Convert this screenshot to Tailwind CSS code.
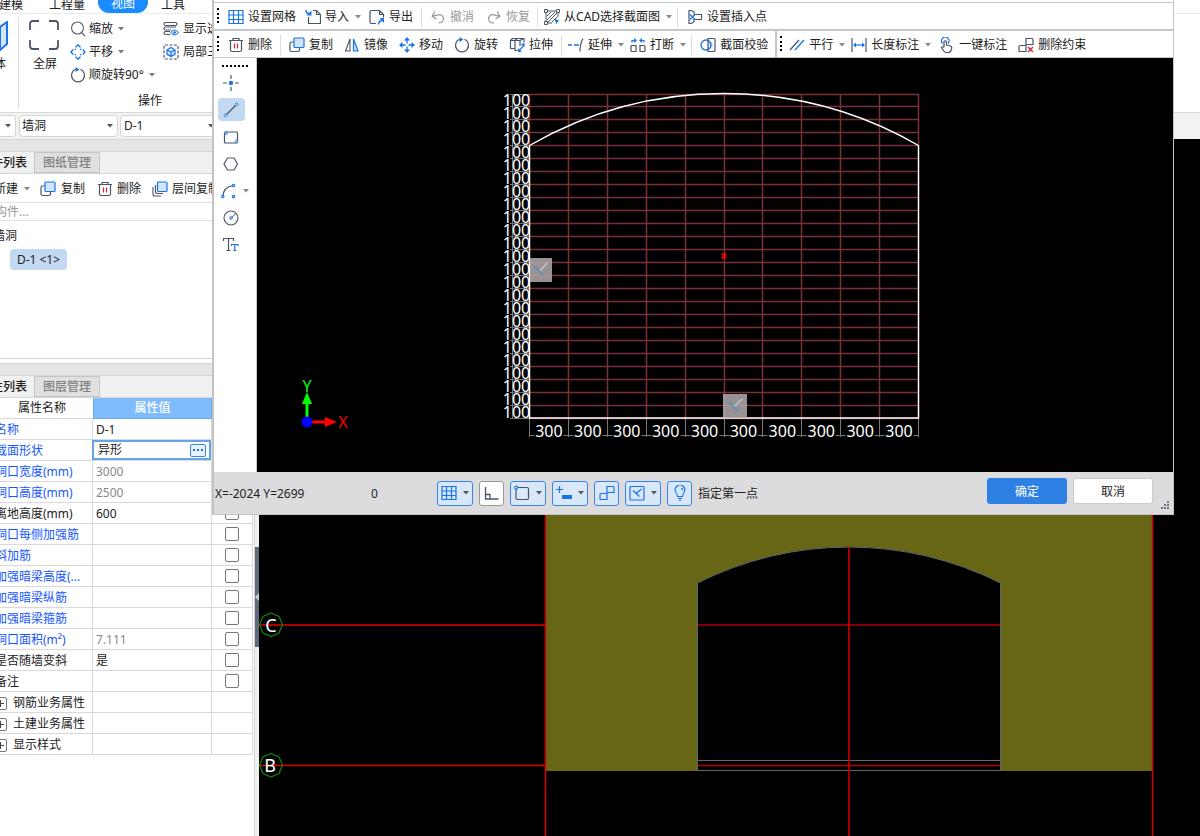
<!DOCTYPE html>
<html lang="zh-CN">
<head>
<meta charset="utf-8">
<title>异形截面编辑器</title>
<script src="https://cdn.jsdelivr.net/npm/@tailwindcss/browser@4"></script>
</head>
<body class="font-['Noto_Sans','Noto_Sans_CJK_SC',sans-serif] text-xs text-[#222] bg-black">
<!-- icon library -->
<svg class="hidden" aria-hidden="true">
  <symbol id="tri" viewBox="0 0 6 4"><path d="M0 0h6L3 3.5z" fill="currentColor"/></symbol>
  <symbol id="grid" viewBox="0 0 16 16"><path d="M1 1.5h14v13H1zM5.5 1.5v13M10.5 1.5v13M1 6h14M1 10.5h14" fill="none" stroke="#1a73e8" stroke-width="1.2"/></symbol>
  <symbol id="import" viewBox="0 0 16 16"><path d="M8 1.5h3.5l4 4v9h-12V8M11.5 1.5v4h4" fill="none" stroke="#4a5568" stroke-width="1.2"/><path d="M1 1c0 3 1 3.500 3 3.500" fill="none" stroke="#1a73e8" stroke-width="1.5"/><path d="M6.500 1.500v5h-5z" fill="#1a73e8"/></symbol>
  <symbol id="export" viewBox="0 0 16 16"><path d="M7 14.5H2.5a1.5 1.5 0 0 1-1.5-1.5v-10a1.5 1.5 0 0 1 1.5-1.5h8l4 4v3M10.5 1.500v4h4" fill="none" stroke="#4a5568" stroke-width="1.2"/><path d="M9.500 15.500c0-2.500 1-3.500 3.500-4" fill="none" stroke="#1a73e8" stroke-width="1.5"/><path d="M10.500 9h4.500v5z" fill="#1a73e8"/></symbol>
  <symbol id="undo" viewBox="0 0 16 16"><path d="M6 2L2.5 6 6 9.5M2.5 6H9a4 4 0 0 1 0 8H7.5" transform="rotate(-12 8 8)" fill="none" stroke="#9a9a9a" stroke-width="1.3"/></symbol>
  <symbol id="redo" viewBox="0 0 16 16"><path d="M10 2l3.5 4L10 9.5M13.5 6H7a4 4 0 0 0 0 8h2" transform="rotate(12 8 8)" fill="none" stroke="#9a9a9a" stroke-width="1.3"/></symbol>
  <symbol id="cad" viewBox="0 0 16 16"><path d="M2 2h12v6M2 2v12h6M3 7l4-4M3 11l8-8M3 14L14 3M8 13l5-5" fill="none" stroke="#4a5568"/><path d="M.5.5h3v3h-3zM12.5.5h3v3h-3zM.5 12.5h3v3h-3z" fill="#fff" stroke="#4a5568"/><path d="M10.5 9.5l5 2.5-2 1-1 2.5z" fill="#1a73e8"/></symbol>
  <symbol id="insert" viewBox="0 0 16 16"><path d="M7 5.5V3L4 1.500H2v13h2L7 13v-2.500h7.500v-5H7" fill="none" stroke="#4a5568" stroke-width="1.2"/><path d="M3 5.500l5 5M8 5.500l-5 5" stroke="#1a73e8" stroke-width="1.2"/></symbol>
  <symbol id="trash" viewBox="0 0 16 16"><path d="M1 3.5h14M5 3.5v-2h6v2M2.500 3.500v9.500q0 1.500 1.500 1.500h8q1.500 0 1.500-1.500V3.500" fill="none" stroke="#4a5568" stroke-width="1.2"/><path d="M6.500 6.500v5M9.500 6.500v5" stroke="#d9232e" stroke-width="1.2"/></symbol>
  <symbol id="copy" viewBox="0 0 16 16"><path d="M5 5H2.5Q1 5 1 6.5V13q0 1.500 1.500 1.500H9q1.500 0 1.500-1.500v-2.500" fill="none" stroke="#4a5568" stroke-width="1.2"/><rect x="5" y="1" width="10" height="9.5" rx="1" fill="#d3e5fb" stroke="#1a73e8" stroke-width="1.2"/></symbol>
  <symbol id="floorcopy" viewBox="0 0 16 16"><path d="M1 6v7q0 2 2 2h6M3.500 4v6.500q0 2 2 2H11" fill="none" stroke="#4a5568" stroke-width="1.1"/><rect x="5.500" y="1" width="9.500" height="9.500" rx="1" fill="#d3e5fb" stroke="#1a73e8" stroke-width="1.2"/></symbol>
  <symbol id="mirror" viewBox="0 0 16 16"><path d="M6 2v12H1.5z" fill="none" stroke="#4a5568" stroke-width="1.1"/><path d="M9.500 2v12H14z" fill="#cfe3fb" stroke="#1a73e8" stroke-width="1.2"/></symbol>
  <symbol id="move" viewBox="0 0 16 16"><g fill="#1a73e8"><path d="M8 0l3 3.5H5zM8 16l3-3.5H5zM0 8l3.5-3v6zM16 8l-3.5-3v6z"/></g><path d="M8 3v10M3 8h10" stroke="#1a73e8" stroke-width="1.3" stroke-dasharray="3.5 3"/></symbol>
  <symbol id="pan" viewBox="0 0 16 16"><g fill="none" stroke="#1a73e8" stroke-width="1.400"><path d="M5.500 3.200L8 1l2.500 2.200M5.500 12.800L8 15l2.500-2.200M3.200 5.500L1 8l2.200 2.500M12.800 5.500L15 8l-2.200 2.500"/><path d="M5 6V5h1M10 5h1v1M11 10v1h-1M6 11H5v-1" stroke-width="1"/></g></symbol>
  <symbol id="rotate" viewBox="0 0 16 16"><path d="M10.5 2.300a6.500 6.500 0 1 1-5 0" fill="none" stroke="#4a5568" stroke-width="1.2"/><path d="M5.500 0l4 2.500-4 2.500z" fill="#1a73e8"/></symbol>
  <symbol id="stretch" viewBox="0 0 16 16"><path d="M8.500 13.500H6V3.500H1.500v8H6M1.500 3.500l2-2h11.500v4M6 3.500l2-2M6 3.500l5 0V9M11 3.500l3.500-2" fill="none" stroke="#4a5568" stroke-width="1.2"/><path d="M10 14l5-6" stroke="#1a73e8" stroke-width="1.2"/><path d="M15.500 6v4l-3.500-3zM9 11v4h3.500z" fill="#1a73e8"/></symbol>
  <symbol id="extend" viewBox="0 0 16 16"><path d="M0 8h4M6 8h5" stroke="#1a73e8" stroke-width="1.3"/><path d="M15 1.500q-3 5-3 13" fill="none" stroke="#4a5568" stroke-width="1.2"/></symbol>
  <symbol id="break" viewBox="0 0 16 16"><path d="M6 8.500H2q-1 0-1 1v4q0 1 1 1h4zM10 8.500h4q1 0 1 1v4q0 1-1 1h-4z" fill="none" stroke="#4a5568" stroke-width="1.2"/><path d="M2 5.500V3.500h3M14 5.500V3.500h-3" fill="none" stroke="#1a73e8" stroke-width="1.2"/><path d="M4 1l3 2.500L4 6zM12 1L9 3.500 12 6z" fill="#1a73e8"/></symbol>
  <symbol id="verify" viewBox="0 0 16 16"><path d="M8 1.500h6q1 0 1 1v11q0 1-1 1H8" fill="none" stroke="#4a5568" stroke-width="1.2"/><path d="M8 3a5 5 0 0 1 0 10z" fill="#d3e5fb"/><circle cx="6" cy="8" r="5" fill="none" stroke="#1a73e8" stroke-width="1.3"/><path d="M8 1v14" stroke="#4a5568" stroke-width="1.2"/></symbol>
  <symbol id="parallel" viewBox="0 0 16 16"><path d="M1 13L10 3" stroke="#4a5568" stroke-width="1.2"/><path d="M6 13l9-10" stroke="#1a73e8" stroke-width="1.3"/></symbol>
  <symbol id="dim" viewBox="0 0 16 16"><path d="M1 1v14M15 1v14" stroke="#4a5568" stroke-width="1.2"/><path d="M3 8h10" stroke="#1a73e8" stroke-width="1.2"/><path d="M2 8l3-2.500v5zM14 8l-3-2.500v5z" fill="#1a73e8"/></symbol>
  <symbol id="hand" viewBox="0 0 16 16"><path d="M3.500 6.500a3.800 3.800 0 1 1 5.500 0" fill="none" stroke="#1a73e8" stroke-width="1.3"/><path d="M5 10V4.500q1.200-1.500 2.400 0V8l4 1q1.600.5 1.300 2l-.5 2q-.7 2.500-3 2.500H7.500q-2 0-3.500-2.500L2.500 10.500Q4 9 5 10.500" fill="none" stroke="#4a5568" stroke-width="1.2"/></symbol>
  <symbol id="unlink" viewBox="0 0 16 16"><path d="M8 14.500H2q-1 0-1-1v-4q0-1 1-1h6zM8 8V1.500h6q1 0 1 1V7.500H8" fill="none" stroke="#4a5568" stroke-width="1.2"/><path d="M10 10l5 5M15 10l-5 5" stroke="#d9232e" stroke-width="1.4"/></symbol>
  <symbol id="point" viewBox="0 0 16 16"><path d="M8 0v4M8 12v4M0 8h4M12 8h4" stroke="#4a5568" stroke-width="1.2"/><circle cx="8" cy="8" r="2.2" fill="#1a73e8"/></symbol>
  <symbol id="line" viewBox="0 0 16 16"><path d="M3 13L13 3" stroke="#4a5568" stroke-width="1.2"/><g fill="#fff" stroke="#1a73e8"><circle cx="2.500" cy="13.500" r="1.3"/><circle cx="13.500" cy="2.500" r="1.3"/></g></symbol>
  <symbol id="rect" viewBox="0 0 16 16"><rect x="1.500" y="3" width="13" height="11" rx="1" fill="none" stroke="#4a5568" stroke-width="1.2"/><g fill="#fff" stroke="#1a73e8"><circle cx="3" cy="4" r="1.3"/><circle cx="13.500" cy="12.500" r="1.3"/></g></symbol>
  <symbol id="hex" viewBox="0 0 16 16"><path d="M4.500 2h6.500L14.500 8 11 14H4.500L1 8z" fill="none" stroke="#4a5568" stroke-width="1.2"/></symbol>
  <symbol id="arc" viewBox="0 0 16 16"><path d="M2 13Q2.500 4 12 2.500" fill="none" stroke="#4a5568" stroke-width="1.2"/><g fill="#fff" stroke="#1a73e8" stroke-width="1.2"><circle cx="1.800" cy="13.500" r="1.2"/><circle cx="12.500" cy="2.500" r="1.2"/><circle cx="12.500" cy="13.500" r="1.2"/></g></symbol>
  <symbol id="circ" viewBox="0 0 16 16"><circle cx="8" cy="8" r="7" fill="none" stroke="#4a5568" stroke-width="1.1"/><path d="M8 8l5-4.500" stroke="#4a5568"/><circle cx="8" cy="8" r="1.3" fill="#fff" stroke="#1a73e8"/></symbol>
  <symbol id="text" viewBox="0 0 16 16"><path d="M.5 4V1.500h10V4M5.500 1.500v12M3.500 13.500h4" fill="none" stroke="#4a5568" stroke-width="1.2"/><path d="M8.500 9V7.500H15V9M11.800 7.500v6M10.300 13.500h3" fill="none" stroke="#1a73e8" stroke-width="1.2"/></symbol>
  <symbol id="zoomg" viewBox="0 0 16 16"><circle cx="7.500" cy="7" r="6" fill="none" stroke="#5a6474" stroke-width="1.1"/><path d="M11.500 11.500L15 15" stroke="#5a6474" stroke-width="1.2"/></symbol>
  <symbol id="layers" viewBox="0 0 16 16"><g fill="none" stroke="#4a5568" stroke-width="1.2"><rect x="1" y="1.500" width="13" height="3" rx="1.5"/><path d="M8 9H2.500a1.500 1.500 0 0 1 0-3H13M7 13.500H2.500a1.500 1.500 0 0 1 0-3H7"/></g><path d="M7.500 11.500q4-5 8 0-4 5-8 0z" fill="#d3e5fb" stroke="#1a73e8"/><circle cx="11.500" cy="11.500" r="1.3" fill="#1a73e8"/></symbol>
  <symbol id="local3d" viewBox="0 0 16 16"><rect x="1" y="1" width="14" height="14" rx="1" fill="none" stroke="#4a5568" stroke-width="1.2" stroke-dasharray="3 1.5"/><path d="M8 3.500l4 2.300v4.500l-4 2.300-4-2.300V5.800zM4 5.800L8 8l4-2.200M8 8v4.500" fill="#d3e5fb" stroke="#1a73e8" stroke-width="1.2"/></symbol>
  <symbol id="ortho" viewBox="0 0 16 16"><path d="M1.500 2v12h13M1.500 9.500h4.500v4.500" fill="none" stroke="#4a5568" stroke-width="1.3"/></symbol>
  <symbol id="snap" viewBox="0 0 16 16"><rect x="2" y="2.500" width="12.500" height="12" rx="1.5" fill="none" stroke="#4a5568" stroke-width="1.2"/><circle cx="2.200" cy="2.700" r="1.5" fill="#fff" stroke="#1a73e8" stroke-width="1.2"/></symbol>
  <symbol id="dyn" viewBox="0 0 16 16"><path d="M3.500 1v7M0 4.500h7" stroke="#1a73e8" stroke-width="1.2"/><rect x="6" y="10" width="10" height="4" fill="#1a73e8"/></symbol>
  <symbol id="link" viewBox="0 0 16 16"><path d="M8 14.500H2q-1 0-1-1V9.500q0-1 1-1h6zM8 8.500V1.500h6q1 0 1 1v5H8" fill="none" stroke="#1a73e8" stroke-width="1.2"/></symbol>
  <symbol id="perp" viewBox="0 0 16 16"><rect x="1" y="1.500" width="14" height="13.500" rx="1" fill="none" stroke="#1a73e8" stroke-width="1.2"/><path d="M4 5.500l6.500 6M7 8.500L12.500 4" stroke="#1a73e8" stroke-width="1.2"/></symbol>
  <symbol id="bulb" viewBox="0 0 16 16"><path d="M5.500 11.500Q5.500 9.500 4 7.500a4.800 4.800 0 1 1 8 0Q10.500 9.500 10.500 11.500zM9 3.200q2 .5 2 2.500M6 13.500h4M7 15.300h2" fill="none" stroke="#1a73e8" stroke-width="1.1"/></symbol>
</svg>

<div class="relative h-screen overflow-hidden flex flex-col">

  <!-- ribbon -->
  <header class="h-28 shrink-0 bg-white overflow-hidden">
    <nav class="h-3.5 flex items-end border-b border-[#ececec]">
      <button class="-ml-px w-6 h-5 pt-1 leading-4 whitespace-nowrap">建模</button>
      <button class="ml-[26px] w-9 h-5 pt-1 leading-4 whitespace-nowrap">工程量</button>
      <button class="ml-[13px] w-[50px] h-[22px] pt-1 leading-4 rounded-full bg-[#1a8cff] text-white">视图</button>
      <button class="ml-[13px] w-6 h-5 pt-1 leading-4 whitespace-nowrap">工具</button>
    </nav>
    <div class="flex pt-[3px]">
      <button class="w-[19px] h-[91px] border-r border-[#ddd] flex flex-col items-start pt-1 overflow-hidden">
        <svg class="w-2.5 h-8" viewBox="0 0 10 32"><path d="M0 6L7 1v22l-7 6z" fill="#d3e5fb" stroke="#1a73e8" stroke-width="2"/></svg>
        <span class="-ml-1.5 mt-[3px] leading-4">体</span>
      </button>
      <div class="flex-1">
        <div class="flex">
          <button class="ml-2.5 w-[30px] flex flex-col items-center pt-[3px]">
            <svg class="w-[30px] h-[30px]" viewBox="0 0 30 30"><path d="M1 10V4q0-3 3-3h6M20 1h6q3 0 3 3v6M29 20v6q0 3-3 3h-6M10 29H4q-3 0-3-3v-6" fill="none" stroke="#4a5568" stroke-width="1.8"/></svg>
            <span class="ml-0.5 mt-1.5 leading-4 whitespace-nowrap">全屏</span>
          </button>
          <div class="ml-[11px] w-[93px] flex flex-col">
            <button class="h-[23px] flex items-center gap-[3px]"><svg class="size-4"><use href="#zoomg"/></svg>缩放<svg class="ml-0.5 w-1.5 h-1 text-[#777]"><use href="#tri"/></svg></button>
            <button class="h-[23px] flex items-center gap-[3px]"><svg class="size-4"><use href="#pan"/></svg>平移<svg class="ml-0.5 w-1.5 h-1 text-[#777]"><use href="#tri"/></svg></button>
            <button class="h-[23px] flex items-center gap-[3px] whitespace-nowrap"><svg class="size-4"><use href="#rotate"/></svg>顺旋转90°<svg class="ml-0.5 w-1.5 h-1 text-[#777]"><use href="#tri"/></svg></button>
          </div>
          <div class="flex flex-col">
            <button class="h-[23px] flex items-center gap-1"><svg class="size-4"><use href="#layers"/></svg>显示选中图元</button>
            <button class="h-[23px] flex items-center gap-1"><svg class="size-4"><use href="#local3d"/></svg>局部三维</button>
          </div>
        </div>
        <div class="ml-[119px] mt-[7px] leading-4">操作</div>
      </div>
    </div>
  </header>

  <!-- component selectors -->
  <div class="h-[27px] shrink-0 bg-[#f2f2f2] border-t border-[#d9d9d9] flex items-center">
    <span class="relative w-4 h-[22px] flex items-center"><select aria-label="楼层" class="appearance-none w-full h-full bg-white border border-l-0 border-[#d5d5d5] rounded-r"><option></option></select><svg class="absolute right-[5px] w-1.5 h-1 text-[#555] pointer-events-none"><use href="#tri"/></svg></span>
    <span class="relative ml-[3px] w-[99px] h-[22px] flex items-center"><select aria-label="构件类型" class="appearance-none w-full h-full bg-white border border-[#d5d5d5] rounded pl-0.5"><option>墙洞</option></select><svg class="absolute right-[5px] w-1.5 h-1 text-[#555] pointer-events-none"><use href="#tri"/></svg></span>
    <span class="relative ml-0.5 w-[96px] h-[22px] flex items-center"><select aria-label="构件名称" class="appearance-none w-full h-full bg-white border border-[#d5d5d5] rounded pl-[3px]"><option>D-1</option></select><svg class="absolute right-0.5 w-1.5 h-1 text-[#555] pointer-events-none"><use href="#tri"/></svg></span>
  </div>

  <div class="flex-1 min-h-0 flex">
    <!-- side panels -->
    <aside class="w-[259px] shrink-0 bg-white flex overflow-hidden">
      <div class="w-[255px] shrink-0 border-r border-[#d5d5d5] flex flex-col">
        <div class="h-3 shrink-0 bg-[#e5e5e5] border-t border-[#d5d5d5]"></div>
        <div class="h-[23px] shrink-0 bg-[#f0f0f0] border-y border-[#d5d5d5] flex font-medium">
          <button class="w-[34px] flex justify-end items-center pr-[7px] whitespace-nowrap">构件列表</button>
          <button class="w-[66px] bg-[#e0e0e0] border border-[#c4c6ce] text-[#808080] whitespace-nowrap leading-4">图纸管理</button>
        </div>
        <div class="h-7 pt-0.5 shrink-0 flex items-center whitespace-nowrap">
          <button class="-ml-1.5 flex items-center">新建<svg class="ml-1.5 w-1.5 h-1 text-[#888]"><use href="#tri"/></svg></button>
          <button class="ml-2.5 flex items-center gap-[5px]"><svg class="size-4"><use href="#copy"/></svg>复制</button>
          <button class="ml-3 flex items-center gap-1"><svg class="size-4"><use href="#trash"/></svg>删除</button>
          <button class="ml-[11px] flex items-center gap-1"><svg class="size-4"><use href="#floorcopy"/></svg>层间复制</button>
        </div>
        <div class="h-[19px] shrink-0 border-y border-[#e0e0e0] flex items-center"><input aria-label="搜索构件" placeholder="构件..." class="-ml-[5px] w-full h-4 outline-none placeholder:text-[#999]"></div>
        <div class="h-[138px] shrink-0 border-b border-[#d0d0d0] pt-1.5">
          <div class="-ml-[7px] leading-[18px]">墙洞</div>
          <button class="block mt-1 ml-2.5 w-[57px] h-[21px] rounded-sm bg-[#c2d9f1] whitespace-nowrap">D-1 &lt;1&gt;</button>
        </div>
        <div class="h-1 shrink-0"></div>
        <div class="h-3 shrink-0 bg-[#e5e5e5] border-t border-[#d5d5d5]"></div>
        <div class="h-[23px] shrink-0 bg-[#f0f0f0] border-y border-[#d5d5d5] flex font-medium">
          <button class="w-[34px] flex justify-end items-center pr-[7px] whitespace-nowrap">属性列表</button>
          <button class="w-[66px] bg-[#e0e0e0] border border-[#c4c6ce] text-[#808080] whitespace-nowrap leading-4">图层管理</button>
        </div>
        <table class="-ml-[5px] w-[258px] table-fixed border-separate border-spacing-0 text-left whitespace-nowrap [&_td]:border-b [&_td]:border-r [&_td]:border-[#d9d9d9] [&_td]:p-0 [&_tr]:h-[21px]">
          <thead><tr>
            <th class="w-[98px] p-0 pl-[23px] font-normal border-b border-[#d9d9d9]">属性名称</th>
            <th class="w-[119px] p-0 text-center font-medium text-white bg-[#80bbfb] border border-t-0 border-[#6aa9ea]">属性值</th>
            <th class="w-[41px] p-0 border-b border-[#d9d9d9]"></th>
          </tr></thead>
          <tbody id="props"></tbody>
        </table>
      </div>
      <div class="w-1 bg-[#f0f0f0] flex flex-col">
        <div class="mt-[408px] h-[100px] bg-[#5f6b7a] flex items-center"><svg class="w-1 h-2" viewBox="0 0 4 8"><path d="M4 0v8L0 4z" fill="#ccc"/></svg></div>
      </div>
    </aside>

    <!-- model view -->
    <main class="flex-1 min-w-0 bg-black">
      <svg class="w-full h-full" viewBox="259 139 941 697" preserveAspectRatio="xMinYMin slice">
        <path fill="#666614" d="M545 500H1152V771H1001V583A337 337 0 0 0 697 583V771H545z"/>
        <path fill="none" stroke="#62666e" d="M697.5 771V583A337 337 0 0 1 1000.5 583V771M697 760.5h304M697 770.5h304"/>
        <path fill="none" stroke="#e00000" stroke-width="1.5" d="M259 625H545M259 765.5H545"/>
        <path fill="none" stroke="#b00000" stroke-width="1.5" d="M698 765.5h302M698 625h302"/>
        <path fill="none" stroke="#d80000" stroke-width="1.5" d="M545.5 500V836M849 547V836M1152.5 500V836"/>
        <g fill="none" stroke="#0a8a0a" stroke-width="1.2"><path d="M271 613l8 3.500 3.500 8-3.500 8.500-8 3.500-8-3.500-3.500-8.500 3.500-8z"/><path d="M271 753.500l8 3.500 3.500 8-3.500 8.500-8 3.500-8-3.500-3.500-8.500 3.500-8z"/></g>
        <g fill="#fff" font-size="18" text-anchor="middle"><text x="271" y="632">C</text><text x="270" y="772">B</text></g>
      </svg>
    </main>
  </div>

  <!-- section editor dialog -->
  <section role="dialog" aria-label="异形截面编辑器" class="absolute top-0 left-[212px] right-[26px] h-[515px] flex flex-col bg-white border-l-2 border-r border-b border-[#c3c3c5]">
    <div class="h-0.5 shrink-0"></div>
    <div class="h-[29px] pt-0.5 shrink-0 border-t border-b-2 border-[#c3c6cb] flex items-center whitespace-nowrap">
      <span class="ml-[3px] mb-1 h-[15px] border-l-2 border-dotted border-black"></span>
      <button class="ml-[9px] flex items-center gap-1"><svg class="size-4"><use href="#grid"/></svg>设置网格</button>
      <button class="ml-[9px] flex items-center gap-1"><svg class="size-4"><use href="#import"/></svg>导入<svg class="ml-0.5 w-1.5 h-1 text-[#888]"><use href="#tri"/></svg></button>
      <button class="ml-2 flex items-center gap-1"><svg class="size-4"><use href="#export"/></svg>导出</button>
      <span class="ml-2 w-px h-5 bg-[#ddd]"></span>
      <button class="ml-2 flex items-center gap-1 text-[#9a9a9a]"><svg class="size-4"><use href="#undo"/></svg>撤消</button>
      <button class="ml-3 flex items-center gap-1 text-[#9a9a9a]"><svg class="size-4"><use href="#redo"/></svg>恢复</button>
      <span class="ml-[7px] w-px h-5 bg-[#ddd]"></span>
      <button class="ml-1.5 flex items-center gap-1"><svg class="size-4"><use href="#cad"/></svg>从CAD选择截面图<svg class="ml-0.5 w-1.5 h-1 text-[#888]"><use href="#tri"/></svg></button>
      <span class="ml-[5px] w-px h-5 bg-[#ddd]"></span>
      <button class="ml-[9px] flex items-center gap-1"><svg class="size-4"><use href="#insert"/></svg>设置插入点</button>
    </div>
    <div class="h-[27px] pt-0.5 shrink-0 border-b border-[#c3c6cb] flex items-center whitespace-nowrap">
      <span class="ml-[3px] mb-1 h-[15px] border-l-2 border-dotted border-black"></span>
      <button class="ml-[9px] flex items-center gap-1"><svg class="size-4"><use href="#trash"/></svg>删除</button>
      <span class="ml-2 w-px h-5 bg-[#ddd]"></span>
      <button class="ml-2 flex items-center gap-1"><svg class="size-4"><use href="#copy"/></svg>复制</button>
      <button class="ml-[11px] flex items-center gap-1"><svg class="size-4"><use href="#mirror"/></svg>镜像</button>
      <button class="ml-[11px] flex items-center gap-1"><svg class="size-4"><use href="#move"/></svg>移动</button>
      <button class="ml-[11px] flex items-center gap-1"><svg class="size-4"><use href="#rotate"/></svg>旋转</button>
      <button class="ml-[11px] flex items-center gap-1"><svg class="size-4"><use href="#stretch"/></svg>拉伸</button>
      <span class="ml-2 w-px h-5 bg-[#ddd]"></span>
      <button class="ml-1.5 flex items-center gap-1"><svg class="size-4"><use href="#extend"/></svg>延伸<svg class="ml-0.5 w-1.5 h-1 text-[#888]"><use href="#tri"/></svg></button>
      <button class="ml-1.5 flex items-center gap-1"><svg class="size-4"><use href="#break"/></svg>打断<svg class="ml-0.5 w-1.5 h-1 text-[#888]"><use href="#tri"/></svg></button>
      <span class="ml-[5px] w-px h-5 bg-[#ddd]"></span>
      <button class="ml-2 flex items-center gap-1"><svg class="size-4"><use href="#verify"/></svg>截面校验</button>
      <span class="ml-[7px] -mt-0.5 w-0.5 h-[26px] bg-[#c3c6cb]"></span>
      <span class="ml-[3px] mb-1 h-[15px] border-l-2 border-dotted border-black"></span>
      <button class="ml-[7px] flex items-center gap-1"><svg class="size-4"><use href="#parallel"/></svg>平行<svg class="ml-0.5 w-1.5 h-1 text-[#888]"><use href="#tri"/></svg></button>
      <button class="ml-1.5 flex items-center gap-1"><svg class="size-4"><use href="#dim"/></svg>长度标注<svg class="ml-0.5 w-1.5 h-1 text-[#888]"><use href="#tri"/></svg></button>
      <button class="ml-2 flex items-center gap-1"><svg class="size-4"><use href="#hand"/></svg>一键标注</button>
      <button class="ml-[11px] flex items-center gap-1"><svg class="size-4"><use href="#unlink"/></svg>删除约束</button>
    </div>
    <div class="flex-1 min-h-0 flex">
      <div class="w-[43px] shrink-0 border-r border-[#c3c6cb] flex flex-col items-start pl-1">
        <span class="ml-1 mt-[7px] mb-0.5 w-[26px] border-t-2 border-dotted border-black"></span>
        <button aria-label="点" class="w-[27px] h-[27px] pr-0.5 flex items-center justify-center"><svg class="size-4"><use href="#point"/></svg></button>
        <button aria-label="直线" class="w-[27px] h-[23px] pr-0.5 my-0.5 rounded bg-[#c2d9f1] flex items-center justify-center"><svg class="size-4"><use href="#line"/></svg></button>
        <button aria-label="矩形" class="w-[27px] h-[27px] pr-0.5 flex items-center justify-center"><svg class="size-4"><use href="#rect"/></svg></button>
        <button aria-label="多边形" class="w-[27px] h-[27px] pr-0.5 flex items-center justify-center"><svg class="size-4"><use href="#hex"/></svg></button>
        <button aria-label="圆弧" class="h-[27px] pl-[3px] flex items-center gap-1.5"><svg class="size-4"><use href="#arc"/></svg><svg class="w-1.5 h-1 text-[#888]"><use href="#tri"/></svg></button>
        <button aria-label="圆" class="w-[27px] h-[27px] pr-0.5 flex items-center justify-center"><svg class="size-4"><use href="#circ"/></svg></button>
        <button aria-label="文字" class="w-[27px] h-[27px] pr-0.5 flex items-center justify-center"><svg class="size-4"><use href="#text"/></svg></button>
      </div>
      <div class="flex-1 min-w-0 bg-black">
        <svg class="w-full h-full" viewBox="257 58 916 414" preserveAspectRatio="xMinYMin meet">
          <path id="gridLines" fill="none" stroke="#7a3038" stroke-width="1.5"/>
          <path id="dimLines" fill="none" stroke="#777" stroke-width="1"/>
          <g id="labels" fill="#fff" font-size="16" text-anchor="middle"></g>
          <path d="M529.5 418V145.5A390 390 0 0 1 918.5 145.5V418z" fill="none" stroke="#fff" stroke-width="1.4"/>
          <path d="M721.5 253.500l5 5M726.500 253.500l-5 5M724 253v6" stroke="#f00" stroke-width="1.3"/>
          <g fill="#b4acac" fill-opacity=".85"><path d="M530 258h22v24h-22zM723 394h24v24h-24z"/></g>
          <path d="M540 271l7-8M734 407l8-8" stroke="#c4c4c8" stroke-width="1.5"/>
          <path d="M534 266l9 9M729 402l9 9" stroke="#4a90d9" stroke-width="1.4"/>
          <path d="M307 422V400" stroke="#0f0" stroke-width="3"/><path d="M307 392l5 12h-10z" fill="#0f0"/>
          <path d="M307 422h20" stroke="#f00" stroke-width="3"/><path d="M337 422l-12-5v10z" fill="#f00"/>
          <circle cx="307" cy="422" r="5.5" fill="#00f"/>
          <g font-size="16" text-anchor="middle"><text x="307" y="392" fill="#0f0">Y</text><text x="343" y="428" fill="#f00">X</text></g>
        </svg>
      </div>
    </div>
    <footer class="h-[42px] shrink-0 bg-[#dcdcde] flex items-center pl-px">
      <output class="w-[156px] pt-0.5 whitespace-nowrap">X=-2024 Y=2699</output>
      <output class="w-[66px] pt-0.5">0</output>
      <div class="flex gap-1.5">
        <button aria-label="网格" class="w-9 h-[25px] rounded-[3px] border border-[#3a86e8] bg-[#d9e7fa] flex items-center justify-between px-[3px]"><svg class="size-4"><use href="#grid"/></svg><svg class="w-1.5 h-1 text-[#555]"><use href="#tri"/></svg></button>
        <button aria-label="正交" class="w-[25px] h-[25px] rounded-[3px] border border-[#999] bg-white flex items-center justify-center"><svg class="size-4"><use href="#ortho"/></svg></button>
        <button aria-label="捕捉" class="w-9 h-[25px] rounded-[3px] border border-[#3a86e8] bg-[#d9e7fa] flex items-center justify-between px-[3px]"><svg class="size-4"><use href="#snap"/></svg><svg class="w-1.5 h-1 text-[#555]"><use href="#tri"/></svg></button>
        <button aria-label="动态输入" class="w-9 h-[25px] rounded-[3px] border border-[#3a86e8] bg-[#d9e7fa] flex items-center justify-between px-[3px]"><svg class="size-4"><use href="#dyn"/></svg><svg class="w-1.5 h-1 text-[#555]"><use href="#tri"/></svg></button>
        <button aria-label="约束" class="w-[25px] h-[25px] rounded-[3px] border border-[#3a86e8] bg-[#d9e7fa] flex items-center justify-center"><svg class="size-4"><use href="#link"/></svg></button>
        <button aria-label="垂直约束" class="w-9 h-[25px] rounded-[3px] border border-[#3a86e8] bg-[#d9e7fa] flex items-center justify-between px-[3px]"><svg class="size-4"><use href="#perp"/></svg><svg class="w-1.5 h-1 text-[#555]"><use href="#tri"/></svg></button>
        <button aria-label="提示" class="w-[25px] h-[25px] rounded-[3px] border border-[#3a86e8] bg-[#d9e7fa] flex items-center justify-center"><svg class="size-4"><use href="#bulb"/></svg></button>
      </div>
      <span class="ml-1.5 pt-0.5 whitespace-nowrap">指定第一点</span>
      <div class="ml-auto flex gap-1.5 mb-1">
        <button class="w-20 h-[26px] pt-px rounded-[3px] bg-[#2f80e4] text-white">确定</button>
        <button class="w-20 h-[26px] pt-px rounded-[3px] bg-white border border-[#cbcbcb]">取消</button>
      </div>
      <svg class="ml-2 mr-1 mt-6 size-2" viewBox="0 0 8 8"><path d="M6 0h2v2H6zM3 3h2v2H3zM6 3h2v2H6zM0 6h2v2H0zM3 6h2v2H3zM6 6h2v2H6z" fill="#6b7480"/></svg>
    </footer>
  </section>
</div>

<script>
  // Property rows: [name, value, kind]
  const rows = [
    ['名称', 'D-1', 'blue'], ['截面形状', '异形', 'edit'], ['洞口宽度(mm)', '3000', 'calc'], ['洞口高度(mm)', '2500', 'calc'],
    ['离地高度(mm)', '600', ''], ['洞口每侧加强筋', '', 'blue'], ['斜加筋', '', 'blue'], ['加强暗梁高度(...', '', 'blue'],
    ['加强暗梁纵筋', '', 'blue'], ['加强暗梁箍筋', '', 'blue'], ['洞口面积(m²)', '7.111', 'calc'], ['是否随墙变斜', '是', ''],
    ['备注', '', ''], ['钢筋业务属性', '', 'group'], ['土建业务属性', '', 'group'], ['显示样式', '', 'group'],
  ];
  document.getElementById('props').innerHTML = rows.map(([n, v, k]) => {
    const blue = k === 'blue' || k === 'edit' || k === 'calc';
    const name = k === 'group'
      ? `<div class="flex items-center"><button aria-label="展开${n}" class="-ml-px mr-1.5 w-[13px] h-[13px] border border-[#777] rounded-[2px] flex items-center justify-center"><svg class="size-[7px]" viewBox="0 0 7 7"><path d="M0 3.5h7M3.5 0v7" stroke="#444"/></svg></button>${n}</div>` : n;
    const value = k === 'edit'
      ? `<div class="-ml-px h-5 border-2 border-[#62a5ea] flex items-center justify-between pl-1 pr-[3px]">${v}<button aria-label="编辑截面" class="w-4 h-[13px] rounded-[2px] border border-[#3a86e8] bg-[#e8f1fd] flex items-center justify-center"><svg class="w-2.5 h-0.5" viewBox="0 0 10 2"><path d="M0 0h2v2H0zM4 0h2v2H4zM8 0h2v2H8z" fill="#1a73e8"/></svg></button></div>` : v;
    const check = k === 'group' ? '' : `<input type="checkbox" aria-label="${n}" class="appearance-none block mx-auto w-3.5 h-3.5 border border-[#777] rounded-[2px] bg-white">`;
    return `<tr><td class="${blue ? 'text-[#1456ff]' : ''}"><div class="pt-0.5">${name}</div></td><td><div class="${k === 'edit' ? '' : 'pl-[3px] pt-0.5'} ${k === 'calc' ? 'text-[#888]' : ''}">${value}</div></td><td>${check}</td></tr>`;
  }).join('');

  // Drawing grid: 10 columns of 300 mm, 25 rows of 100 mm
  const x0 = 529.5, x1 = 918.5, y0 = 94, y1 = 418, cols = 10, n = 25;
  const dx = (x1 - x0) / cols, dy = (y1 - y0) / n;
  let g = '', d = '', t = '';
  for (let i = 0; i <= cols; i++) {
    const x = Math.floor(x0 + i * dx) + 0.5;
    g += `M${x} ${y0}V${y1}`;
    d += `M${x} ${y1}V437M${x - (i ? 5 : 0)} 435.5H${x + (i < cols ? 5 : 0)}`;
    if (i < cols) t += `<text x="${x0 + (i + 0.5) * dx}" y="437">300</text>`;
  }
  for (let i = 0; i <= n; i++) {
    const y = Math.floor(y0 + i * dy) + 0.5;
    g += `M${x0} ${y}H${x1}`;
    d += `M510 ${y}H${x0}`;
    if (i < n) t += `<text x="516.5" y="${y0 + (i + 0.5) * dy + 6}">100</text>`;
  }
  d += `M512.5 ${y0}V${y1}`;
  document.getElementById('gridLines').setAttribute('d', g);
  document.getElementById('dimLines').setAttribute('d', d);
  document.getElementById('labels').innerHTML = t;
</script>
</body>
</html>
